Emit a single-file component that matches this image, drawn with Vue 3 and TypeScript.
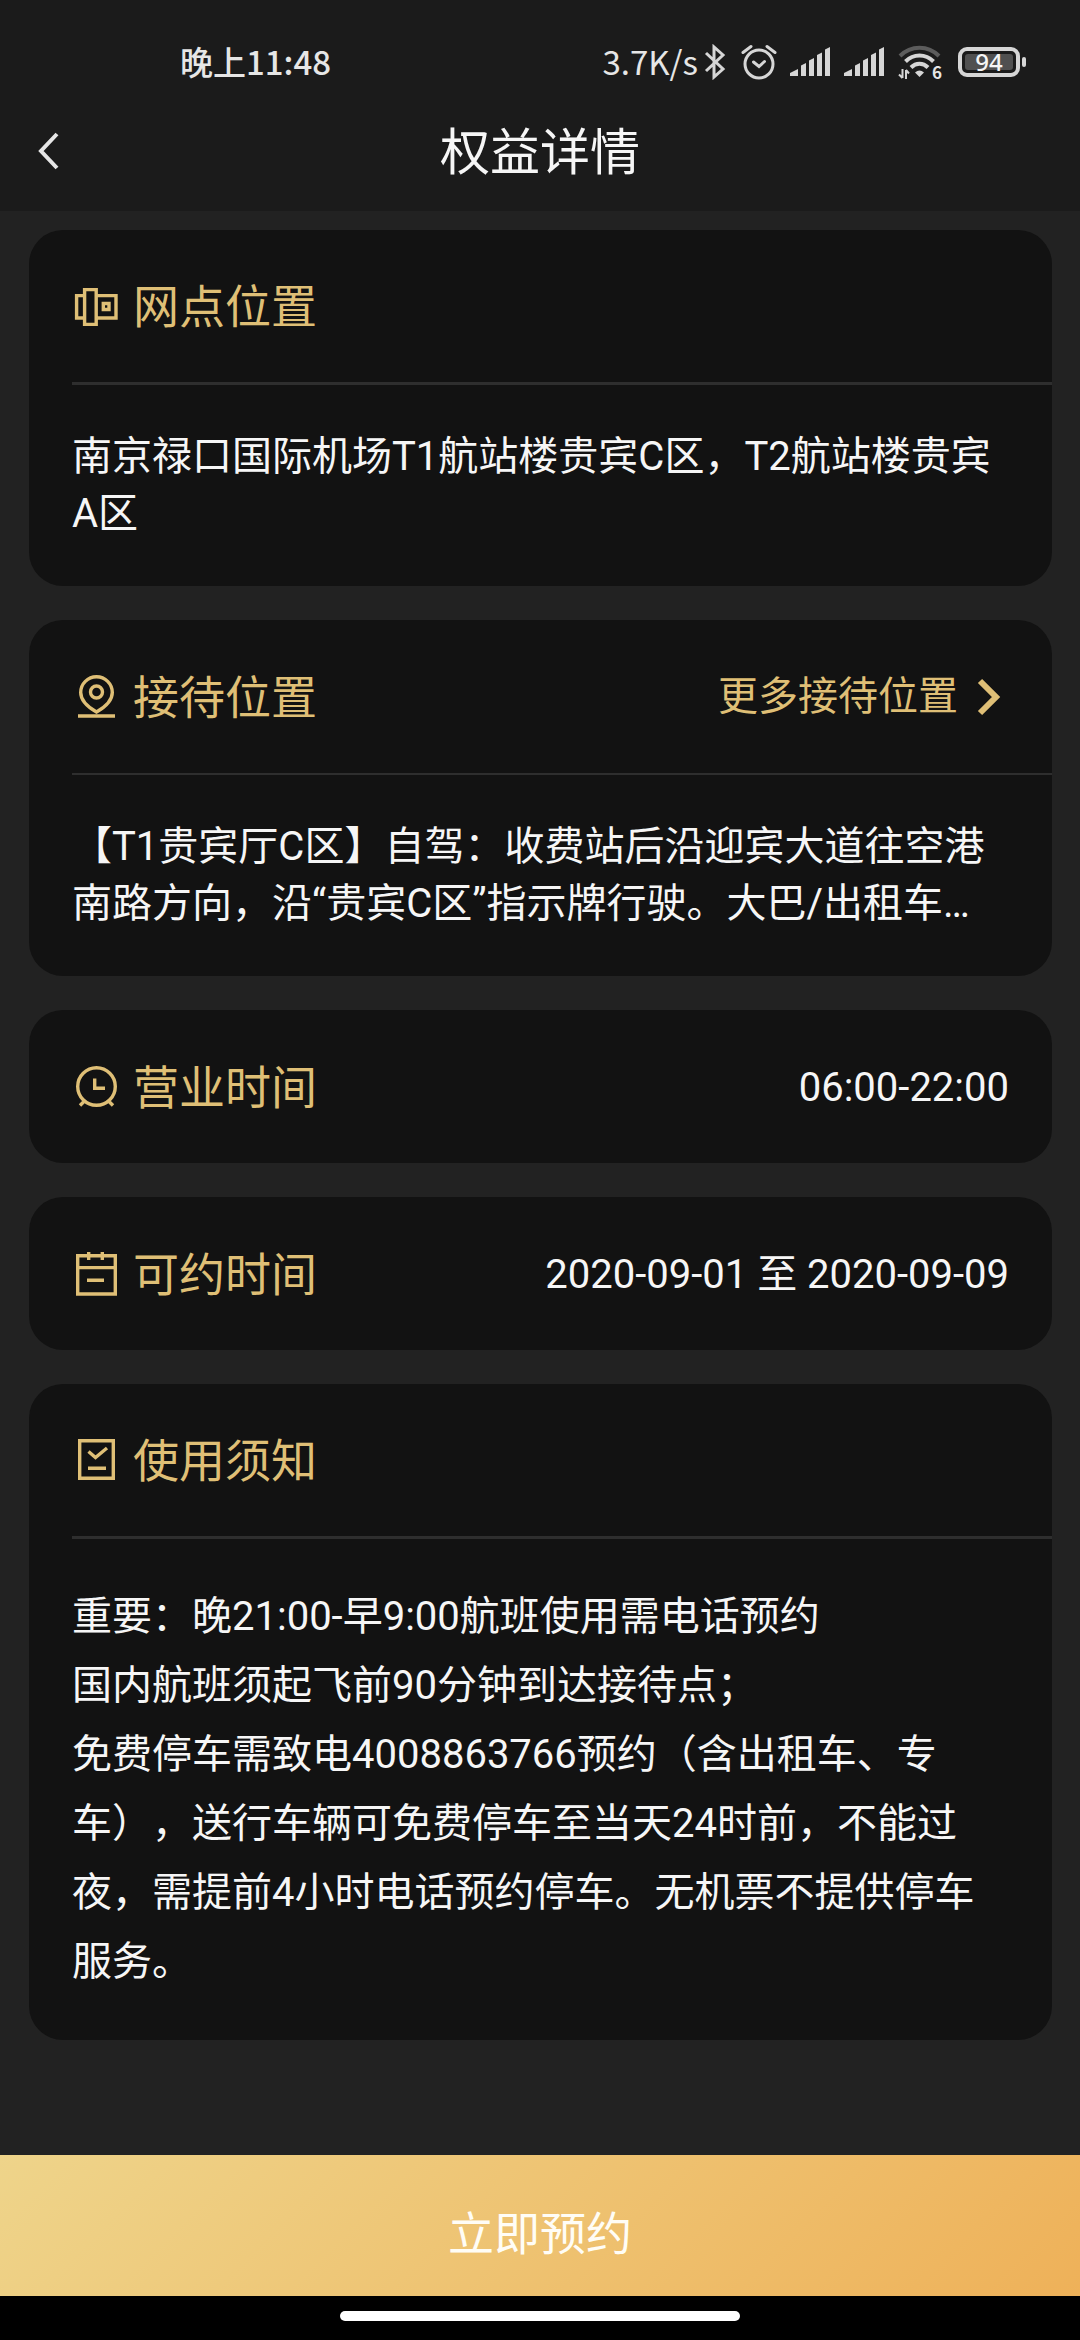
<script setup lang="ts">
type IconName = 'store' | 'pin' | 'clock' | 'calendar' | 'notice'

interface Section {
  id: string
  icon: IconName
  title: string
  more?: string
  value?: string
  summary?: string
  notes?: string[]
  thinRule?: boolean
}

const pageTitle = '权益详情'

const sections: Section[] = [
  {
    id: 'branch',
    icon: 'store',
    title: '网点位置',
    summary: '南京禄口国际机场T1航站楼贵宾C区，T2航站楼贵宾A区',
  },
  {
    id: 'reception',
    icon: 'pin',
    title: '接待位置',
    more: '更多接待位置',
    summary: '【T1贵宾厅C区】自驾：收费站后沿迎宾大道往空港南路方向，沿“贵宾C区”指示牌行驶。大巴/出租车…',
    thinRule: true,
  },
  { id: 'hours', icon: 'clock', title: '营业时间', value: '06:00-22:00' },
  { id: 'dates', icon: 'calendar', title: '可约时间', value: '2020-09-01 至 2020-09-09' },
  {
    id: 'rules',
    icon: 'notice',
    title: '使用须知',
    notes: [
      '重要：晚21:00-早9:00航班使用需电话预约',
      '国内航班须起飞前90分钟到达接待点；',
      '免费停车需致电4008863766预约（含出租车、专车），送行车辆可免费停车至当天24时前，不能过夜，需提前4小时电话预约停车。无机票不提供停车服务。',
    ],
  },
]

const iconPaths: Record<IconName, string> = {
  store: 'M12.6 7.600H24.200V42.400H12.600ZM12.600 13.600H4.600V36H12.600M24.200 13.600H44V36H24.200M31.300 21.500H37V27.500H31.300Z',
  pin: 'M24.5 39C14 33 8.700 27 8.700 19.500a15.800 15.800 0 0 1 31.600 0C40.300 27 35 33 24.500 39ZM18.500 19a6 6 0 1 0 12 0a6 6 0 1 0 -12 0M6 43H43',
  clock: 'M5.7 23.500a18.800 18.800 0 1 0 37.600 0a18.800 18.800 0 1 0 -37.600 0M22.700 15.500V25.300H33M13 37.500L8 42.500M36 37.500L41 42.500',
  calendar: 'M5.7 5.700H43.300V44H5.700ZM5.700 17.600H43.300M16.700 2V10M30.300 2V10M15 30.300H32',
  notice: 'M7.7 4.700H41.300V42.300H7.700ZM16.500 15.500L23.500 21.500L35 12M16 32.300H34',
}
</script>

<template>
  <div class="page" lang="zh-CN">
    <header class="top">
      <div class="status">
        <span class="time">晚上11:48</span>
        <span class="speed">3.7K/s</span>
        <svg class="bluetooth" width="22" height="36" viewBox="0 0 22 36" aria-hidden="true">
          <path d="M2 9L19 25L10 33V3L19 11L2 27" />
        </svg>
        <svg class="alarm" width="36" height="36" viewBox="0 0 36 36" aria-hidden="true">
          <circle cx="18" cy="20" r="14" />
          <path d="M12.500 18L18 22.500L23.500 17.500M2 8.500L10 2.500M26 2.500L34 8.500" />
        </svg>
        <svg v-for="n in 2" :key="n" class="signal" width="40" height="30" viewBox="0 0 40 30" aria-hidden="true">
          <path d="M0 26L8 22V29H0ZM11 18.500L16 16V29H11ZM19 13.500L24 11V29H19ZM27 8L32 5.500V29H27ZM35 2.500L40 0V29H35Z" />
        </svg>
        <svg class="wifi" width="44" height="36" viewBox="0 0 44 36" aria-hidden="true">
          <path class="faint" d="M2 12C13 1 30 1 41 12" />
          <path class="arc" d="M7.500 17.500C15.500 9.500 27.500 9.500 35.500 17.500M13 23.500C18 18.500 25 18.500 30 23.500" />
          <path class="dot" d="M17 28.500Q21.500 24.500 26 28.500L21.500 33Z" />
          <path class="data" d="M4.500 25V34M1 30.500L4.500 34M8 35V26M8 26L11 29.500" />
          <text x="34" y="35">6</text>
        </svg>
        <span class="battery"><span class="level">94</span></span>
      </div>
      <nav class="bar">
        <button class="back" type="button" aria-label="返回">
          <svg width="24" height="40" viewBox="0 0 24 40" aria-hidden="true">
            <path d="M21 2L5 19L21 36" />
          </svg>
        </button>
        <h1>{{ pageTitle }}</h1>
      </nav>
    </header>

    <main class="cards">
      <section v-for="s in sections" :key="s.id" class="card" :aria-labelledby="s.id">
        <div class="head" :class="{ ruled: s.summary || s.notes, thin: s.thinRule }">
          <svg class="icon" width="48" height="48" viewBox="0 0 48 48" aria-hidden="true">
            <path :d="iconPaths[s.icon]" stroke-width="3.4" />
          </svg>
          <h2 :id="s.id">{{ s.title }}</h2>
          <a v-if="s.more" class="more" href="#">
            {{ s.more }}
            <svg width="40" height="40" viewBox="0 0 40 40" aria-hidden="true">
              <path d="M11 4L27 20L11 36" />
            </svg>
          </a>
          <span v-if="s.value" class="value">{{ s.value }}</span>
        </div>
        <p v-if="s.summary" class="body">{{ s.summary }}</p>
        <div v-if="s.notes" class="body notes">
          <p v-for="line in s.notes" :key="line">{{ line }}</p>
        </div>
      </section>
    </main>

    <footer>
      <button class="reserve" type="button">立即预约</button>
      <div class="gesture"><span class="pill"></span></div>
    </footer>
  </div>
</template>

<style>
body {
  margin: 0;
  background: #222222;
}
</style>

<style scoped>
.page {
  display: flex;
  flex-direction: column;
  min-height: 100vh;
  background: #222222;
  color: #f6f6f6;
  font-family: Roboto, "Noto Sans CJK SC", sans-serif;
  font-size: 40px;
  text-spacing-trim: space-all;
}

h1,
h2,
p {
  margin: 0;
  font-weight: 400;
}

button {
  border: 0;
  font: inherit;
  color: inherit;
}

svg {
  display: block;
  flex: none;
  fill: none;
}

.top {
  background: #1b1b1b;
}

.status {
  display: flex;
  align-items: center;
  box-sizing: border-box;
  height: 92px;
  padding: 32px 54px 0 180px;
  color: #e6e6e6;
  font-family: "Noto Sans CJK SC", sans-serif;
  font-size: 33px;
  line-height: 48px;
}

.time,
.speed {
  padding-bottom: 2px;
}

.time {
  margin-right: auto;
  font-weight: 500;
}

.speed {
  margin-right: 6px;
}

.bluetooth,
.alarm {
  stroke: #d6d6d6;
  stroke-width: 3;
}

.bluetooth {
  margin-right: 15px;
}

.alarm {
  margin-right: 13px;
  stroke-linecap: round;
}

.signal {
  margin-right: 14px;
  fill: #d6d6d6;
}

.wifi {
  margin-right: 16px;
  overflow: visible;
  stroke: #d6d6d6;
  stroke-width: 4;
}

.wifi .faint {
  stroke: #5c5c5c;
}

.wifi .dot {
  fill: #d6d6d6;
  stroke: none;
}

.wifi .data {
  stroke-width: 2;
}

.wifi text {
  fill: #e6e6e6;
  stroke: none;
  font-size: 17px;
  font-weight: 700;
}

.battery {
  position: relative;
  box-sizing: border-box;
  width: 62px;
  height: 30px;
  margin-right: 6px;
  padding: 3px;
  border: 4px solid #d6d6d6;
  border-radius: 9px;
}

.battery::after {
  content: "";
  position: absolute;
  top: 6px;
  right: -10px;
  width: 4px;
  height: 10px;
  border-radius: 2px;
  background: #d6d6d6;
}

.level {
  display: block;
  height: 16px;
  border-radius: 3px;
  background: #505050;
  color: #f6f6f6;
  font-family: "Noto Sans", sans-serif;
  font-size: 24px;
  font-weight: 500;
  line-height: 16px;
  text-align: center;
}

.bar {
  display: grid;
  grid-template-columns: 1fr auto 1fr;
  align-items: center;
  height: 119px;
  padding: 0 36px;
}

.back {
  justify-self: start;
  padding: 0;
  background: none;
  cursor: pointer;
}

.back svg {
  stroke: #e6e6e6;
  stroke-width: 4;
}

h1 {
  padding-top: 2px;
  font-size: 50px;
  line-height: 60px;
}

.cards {
  display: flex;
  flex-direction: column;
  gap: 34px;
  padding: 19px 28px 32px 29px;
}

.card {
  border-radius: 34px;
  background: #121212;
}

.head {
  display: flex;
  align-items: center;
  box-sizing: border-box;
  height: 153px;
  margin-left: 43px;
  padding-right: 43px;
}

.head.ruled {
  height: 155px;
  border-bottom: 3px solid #2e2e2e;
}

.head.thin {
  border-bottom-width: 2px;
}

.icon {
  margin-right: 13px;
  stroke: #dfbf76;
}

h2 {
  padding-top: 2px;
  color: #dfbf76;
  font-size: 46px;
  line-height: 60px;
}

.more {
  display: flex;
  align-items: center;
  gap: 11px;
  margin-left: auto;
  color: #dfbf76;
  line-height: 57px;
  text-decoration: none;
}

.more svg {
  stroke: #dfbf76;
  stroke-width: 6;
}

.value {
  margin-left: auto;
  padding-top: 2px;
  line-height: 57px;
}

.body {
  padding: 43px 43px 44px;
  line-height: 57px;
}

.notes {
  line-height: 69px;
}

footer {
  margin-top: auto;
}

.reserve {
  display: block;
  width: 100%;
  height: 141px;
  padding: 8px 0 0;
  background: linear-gradient(135deg, #eed48a, #eeb159);
  color: #fffdf6;
  font-size: 46px;
  cursor: pointer;
}

.gesture {
  display: flex;
  align-items: center;
  justify-content: center;
  height: 44px;
  padding-bottom: 4px;
  box-sizing: border-box;
  background: #000000;
}

.pill {
  width: 37%;
  height: 10px;
  border-radius: 5px;
  background: #ffffff;
}
</style>
